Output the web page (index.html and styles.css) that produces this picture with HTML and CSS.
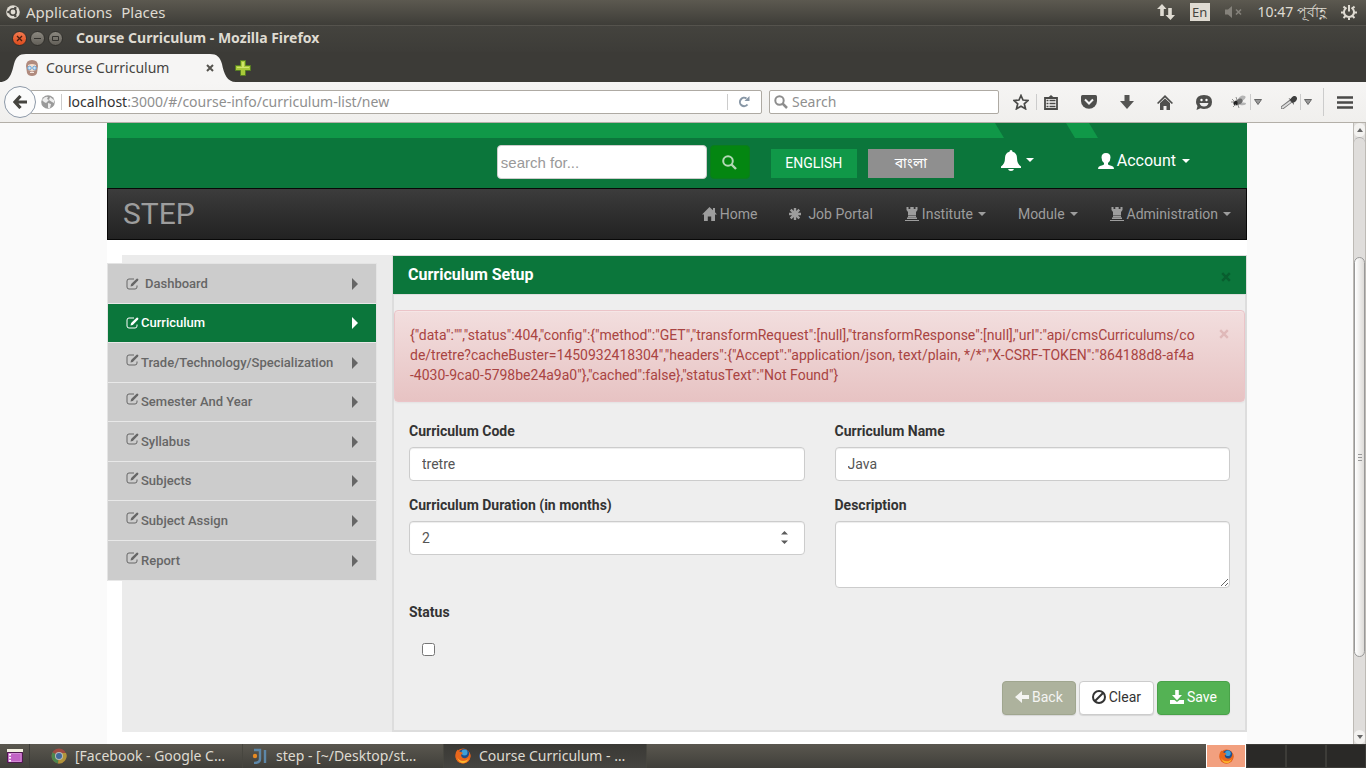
FILE: index.html
```html
<!DOCTYPE html>
<html lang="en">
<head>
<meta charset="utf-8">
<title>Course Curriculum</title>
<link rel="stylesheet" href="styles.css">
</head>
<body>
<svg class="defs" width="0" height="0" aria-hidden="true">
  <symbol id="i-edit" viewBox="0 0 13 12"><path d="M8 1H3Q1 1 1 3v6q0 2 2 2h6q2 0 2-2V7.500" fill="none" stroke="currentColor"/><path d="M4.500 8.500l.6-2.500L10.600.8q.8-.6 1.500.1t0 1.500L6.800 8z" fill="currentColor"/></symbol>
  <symbol id="i-tower" viewBox="0 0 14 14"><path d="M1.500 0h2v2h1.800V0h3.400v2h1.800V0h2v3L11 5v3.500H3V5L1.500 3zM3 9h8v1.200H3zM2 10.500h10v1.500H2zM0 13h14v1H0z" fill="currentColor"/></symbol>
  <symbol id="i-ff" viewBox="0 0 16 16"><circle cx="8" cy="8" r="7.500" fill="#e2611b"/><circle cx="9" cy="6.500" r="5.500" fill="#1d4f8f"/><circle cx="9.500" cy="4.500" r="3" fill="#3f9fd8"/><path d="M1 4q1-2 2-2.500Q3.500 4 6 4l2 1-2 2q1 4 5 3 3-1 3.500-6Q17 9 13.500 13T4 14.500Q-1 11 1 4z" fill="#e8661c"/><path d="M2 9q2 4 6 4t6-3q-2 5-6 5t-6-6z" fill="#fbb52c"/></symbol>
</svg>

<header class="panel">
  <nav class="panel-menu">
    <svg width="14" height="14" viewBox="0 0 14 14"><circle cx="7" cy="7" r="6.800" fill="#dfdbd2"/><circle cx="7" cy="7" r="3.200" fill="none" stroke="#4b4943" stroke-width="1.600"/><g fill="#4b4943"><circle cx="2.500" cy="7" r="1.300"/><circle cx="9.300" cy="3" r="1.300"/><circle cx="9.300" cy="11" r="1.300"/></g></svg>
    <a href="#">Applications</a>
    <a href="#">Places</a>
  </nav>
  <div class="panel-status">
    <svg width="18" height="18" viewBox="0 0 18 18" fill="#dfdbd2"><path d="M0 6l5-5 4.500 5H6.800v7H3.200V6zM8.500 12h2.700V5h3.600v7H18l-4.500 5z"/></svg>
    <span class="lang-ind">En</span>
    <svg class="mute" width="18" height="14" viewBox="0 0 18 14"><path d="M0 4.500h3l4-3.500v12L3 9.500H0z" fill="#85827b"/><path d="M11 4.500l5 5m0-5l-5 5" stroke="#85827b" stroke-width="1.600"/></svg>
    <span class="clock">10:47 পূর্বাহ্ণ</span>
    <svg width="16" height="16" viewBox="0 0 16 16" fill="none" stroke="#dfdbd2" stroke-width="2"><path d="M5.500 3.700a5 5 0 1 0 5 0M8 1v6.500M2.500 2.500l2 2M13.500 2.500l-2 2M0 8.500h3M13 8.500h3M2.500 14l2-2M13.500 14l-2-2M8 13v3"/></svg>
  </div>
</header>

<div class="titlebar">
  <div class="win-buttons">
    <button class="win close" aria-label="Close window"><svg width="7" height="7" viewBox="0 0 7 7"><path d="M1 1l5 5M6 1L1 6" stroke="#4a2012" stroke-width="1.300"/></svg></button>
    <button class="win" aria-label="Minimize"><svg width="7" height="7" viewBox="0 0 7 7"><path d="M0 3.500h7" stroke="#33322e"/></svg></button>
    <button class="win" aria-label="Maximize"><svg width="7" height="7" viewBox="0 0 7 7"><path d="M.5 1.500h6v4h-6z" fill="none" stroke="#33322e"/></svg></button>
  </div>
  <h1 class="win-title">Course Curriculum - Mozilla Firefox</h1>
</div>

<div class="tabs">
  <div class="tab">
    <svg class="tab-shape" viewBox="0 0 236 28" preserveAspectRatio="none"><path d="M0 28C10 28 12 18 14 10C16 3 19 0 26 0H210C217 0 220 3 222 10C224 20 227 28 236 28Z" fill="#f6f5f4"/></svg>
    <svg class="favicon" width="16" height="16" viewBox="0 0 16 16"><path d="M2 6q0-6 6-6t6 6l-1 7q-1 3-5 3t-5-3z" fill="#b08a7d"/><path d="M4 5q4-2 8 0v5q-4 2-8 0z" fill="#f3ddcd"/><path d="M6 12q2-1 4 0v1H6z" fill="#f4e6df"/><g fill="#cfe4f5" stroke="#6aa6d8"><circle cx="5.500" cy="8" r="1.800"/><circle cx="10.500" cy="8" r="1.800"/></g></svg>
    <span class="tab-title">Course Curriculum</span>
    <button class="tab-close" aria-label="Close tab"><svg width="8" height="8" viewBox="0 0 8 8"><path d="M1 1l6 6M7 1L1 7" stroke="#55534e" stroke-width="2"/></svg></button>
  </div>
  <button class="new-tab" aria-label="New tab"><svg width="16" height="16" viewBox="0 0 16 16"><path d="M5.500.5h5v5h5v5h-5v5h-5v-5h-5v-5h5z" fill="#a8c93a" stroke="#567d22"/><path d="M7 2h2v5h5v1H2V7h5z" fill="#cfe56c"/></svg></button>
</div>

<div class="toolbar">
  <button class="back" aria-label="Back"><svg width="14" height="14" viewBox="0 0 14 14"><path d="M7.500 1L2 7l5.500 6M2.500 7H14" fill="none" stroke="#45443f" stroke-width="3.200"/></svg></button>
  <form class="urlbar">
    <svg width="14" height="14" viewBox="0 0 14 14"><circle cx="7" cy="7" r="6.800" fill="#9a9a9a"/><path d="M1 5q3-4 6-3l-1 2 2 1-3 3-2-1zM9 2l4 3v3l-2-1-3-2zM7 8l3 1-1 4H7z" fill="#ededed"/></svg>
    <span class="vsep"></span>
    <span class="url"><b>localhost</b>:3000/#/course-info/curriculum-list/new</span>
    <span class="vsep"></span>
    <button class="reload" type="button" aria-label="Reload"><svg width="12" height="12" viewBox="0 0 12 12"><path d="M9.500 8.500A4.200 4.200 0 1 1 8.500 2.500" fill="none" stroke="#8796a5" stroke-width="2"/><path d="M6.500 5H11.500V0z" fill="#8796a5"/></svg></button>
  </form>
  <form class="searchbar">
    <svg width="14" height="14" viewBox="0 0 14 14" fill="none" stroke="#8d8d8d" stroke-width="2"><circle cx="5.500" cy="5.500" r="4.200"/><path d="M8.500 8.500L13 13" stroke-width="2.500"/></svg>
    <input type="text" placeholder="Search" aria-label="Search the web">
  </form>
  <div class="tools">
    <span class="group marks">
      <button aria-label="Bookmark"><svg width="16" height="16" viewBox="0 0 16 16"><path d="M8 1.500l2 4.500 5 .5-3.700 3.300 1.200 5L8 12.200l-4.500 2.600 1.200-5L1 6.500 6 6z" fill="none" stroke="#4a4a48" stroke-width="1.700"/></svg></button>
      <span class="vsep"></span>
      <button aria-label="Reading list"><svg width="14" height="15" viewBox="0 0 14 15"><path d="M3 3.500L7 0l4 3.500z" fill="#4a4a48"/><path d="M1 3h12v11H1z" fill="#f4f3f2" stroke="#4a4a48" stroke-width="1.800"/><path d="M2.500 5.500h2m1 0h6m-9 3h2m1 0h6m-9 3h2m1 0h6" stroke="#4a4a48" stroke-width="1.500"/></svg></button>
    </span>
    <button aria-label="Pocket"><svg width="16" height="14" viewBox="0 0 16 14"><path d="M1.500 0h13Q16 0 16 1.500V6a8 7.800 0 0 1-16 0V1.500Q0 0 1.500 0z" fill="#4f4f4d"/><path d="M4 4.500l4 4 4-4" fill="none" stroke="#f4f4f4" stroke-width="2"/></svg></button>
    <button aria-label="Downloads"><svg width="14" height="14" viewBox="0 0 14 14"><path d="M4.500 0h5v6H14l-7 8-7-8h4.500z" fill="#555553"/></svg></button>
    <button aria-label="Home page"><svg width="16" height="15" viewBox="0 0 16 15" fill="#4f4f4d"><path d="M0 8L8 0l8 8-1.200 1L8 2.500 1.200 9z"/><path d="M3 8l5-4.500L13 8v7H9.500v-4h-3v4H3z"/></svg></button>
    <button aria-label="Chat"><svg width="16" height="15" viewBox="0 0 16 15"><path d="M8 0q8 0 8 7t-8 7q-2 0-3.500-.7L.5 15l1-4Q0 9.500 0 7q0-7 8-7z" fill="#4f4f4d"/><circle cx="5.500" cy="5" r="1.200" fill="#fff"/><circle cx="10.500" cy="5" r="1.200" fill="#fff"/><path d="M3.500 8h9q-1 3.500-4.500 3.500T3.500 8z" fill="#eee"/></svg></button>
    <span class="group addon">
      <button aria-label="Firebug"><svg width="16" height="14" viewBox="0 0 16 14"><path d="M7 4q3-5 7-3 2 2-3 5zM8 8q5-1 7 0 0 3-6 2z" fill="#b5b5b5"/><ellipse cx="7.500" cy="7" rx="4.500" ry="2.600" fill="#6d6d6d" transform="rotate(-30 7.500 7)"/><circle cx="4.500" cy="8" r="2.200" fill="#222"/><path d="M1 4l3 3M5 2l1 3M2 12l3-3M8 13l-1-3M0 7h3" stroke="#777" stroke-width=".8"/></svg></button>
      <span class="vsep"></span>
      <button aria-label="Firebug options"><svg width="8" height="6" viewBox="0 0 8 6"><path d="M.5.5h7L4 5.500z" fill="#999" stroke="#666"/></svg></button>
    </span>
    <span class="group addon picker">
      <button aria-label="Colour picker"><svg width="16" height="13" viewBox="0 0 16 13"><path d="M1.500 11.500L10 5" stroke="#777" stroke-width="3.500" stroke-linecap="round"/><path d="M1.500 11.500L9 6" stroke="#ddd" stroke-width="1.800" stroke-linecap="round"/><path d="M7.500 2l2 1q3-4.500 5.500-2.500t-1 5.500l-1.500.5.5 2.500z" fill="#3f3f3f"/></svg></button>
      <span class="vsep"></span>
      <button aria-label="Colour picker options"><svg width="8" height="6" viewBox="0 0 8 6"><path d="M.5.5h7L4 5.500z" fill="#999" stroke="#666"/></svg></button>
    </span>
    <span class="group menu">
      <span class="vsep tall"></span>
      <button aria-label="Menu"><svg width="16" height="13" viewBox="0 0 16 13"><path d="M0 1.500h16M0 6.500h16M0 11.500h16" stroke="#4a4a48" stroke-width="2.600"/></svg></button>
    </span>
  </div>
</div>

<div class="viewport">
  <div class="page">
    <div class="container">
      <div class="stripe"><span class="stripe-long"></span><span class="stripe-short"></span></div>
      <div class="top">
        <form class="search">
          <input type="text" placeholder="search for..." aria-label="Search for">
          <button type="button" aria-label="Search"><svg width="15" height="15" viewBox="0 0 15 15" fill="none" stroke="#b3d9b6" stroke-width="2"><circle cx="6" cy="6" r="4.800"/><path d="M9.500 9.500l4.500 4.500" stroke-width="2.400"/></svg></button>
        </form>
        <button class="locale en" type="button">ENGLISH</button>
        <button class="locale bn" type="button" lang="bn">বাংলা</button>
        <a class="bell" href="#" aria-label="Notifications"><svg width="20" height="21" viewBox="0 0 20 21" fill="#fff"><path d="M10 0q1.500 0 1.500 1.800Q16 3 16 8q0 6 4 8.500v1.500H0v-1.500Q4 14 4 8q0-5 4.500-6.200Q8.500 0 10 0zM7 19h6q-.5 2-3 2t-3-2z"/></svg><i class="caret"></i></a>
        <a class="account" href="#"><svg width="16" height="16" viewBox="0 0 16 16" fill="#fff"><path d="M8 0q4.500 0 4.500 4.500Q12.500 8 10 10v1.500q1 .8 4 1.500 2 .7 2 3H0q0-2.300 2-3 3-.7 4-1.500V10Q3.500 8 3.500 4.500 3.500 0 8 0z"/></svg><span>Account</span><i class="caret"></i></a>
      </div>

      <nav class="navbar">
        <a class="brand" href="#">STEP</a>
        <div class="nav">
          <a href="#"><svg width="15" height="14" viewBox="0 0 15 14" fill="currentColor"><path d="M7.500 0L11 3.300V1h2v4.200L15 7.500h-2V14H9.200V9.500H5.800V14H2V7.500H0z"/></svg>Home</a>
          <a class="wide" href="#"><svg width="12" height="12" viewBox="0 0 12 12" stroke="currentColor" stroke-width="2.400"><path d="M6 0v12M0 6h12M1.700 1.700l8.600 8.600M10.300 1.700l-8.600 8.600"/></svg>Job Portal</a>
          <a href="#"><svg width="14" height="14"><use href="#i-tower"/></svg>Institute<i class="caret"></i></a>
          <a href="#">Module<i class="caret"></i></a>
          <a href="#"><svg width="14" height="14"><use href="#i-tower"/></svg>Administration<i class="caret"></i></a>
        </div>
      </nav>

      <div class="content">
        <nav class="side">
          <a class="level first" href="#"><svg width="13" height="12"><use href="#i-edit"/></svg><span>Dashboard</span></a>
          <a class="level active" href="#"><svg width="13" height="12"><use href="#i-edit"/></svg><span>Curriculum</span></a>
          <a href="#"><svg width="13" height="12"><use href="#i-edit"/></svg><span>Trade/Technology/Specialization</span></a>
          <a href="#"><svg width="13" height="12"><use href="#i-edit"/></svg><span>Semester And Year</span></a>
          <a href="#"><svg width="13" height="12"><use href="#i-edit"/></svg><span>Syllabus</span></a>
          <a href="#"><svg width="13" height="12"><use href="#i-edit"/></svg><span>Subjects</span></a>
          <a href="#"><svg width="13" height="12"><use href="#i-edit"/></svg><span>Subject Assign</span></a>
          <a href="#"><svg width="13" height="12"><use href="#i-edit"/></svg><span>Report</span></a>
        </nav>

        <main class="setup">
          <header class="setup-head">
            <h2>Curriculum Setup</h2>
            <button class="x" type="button" aria-label="Close"><svg width="10" height="10" viewBox="0 0 10 10"><path d="M1.200 1.200l7.600 7.600M8.800 1.200L1.200 8.800" stroke="currentColor" stroke-width="2.400"/></svg></button>
          </header>
          <div class="alert" role="alert">
            <p>{"data":"","status":404,"config":{"method":"GET","transformRequest":[null],"transformResponse":[null],"url":"api/cmsCurriculums/co<br>de/tretre?cacheBuster=1450932418304","headers":{"Accept":"application/json, text/plain, */*","X-CSRF-TOKEN":"864188d8-af4a<br>-4030-9ca0-5798be24a9a0"},"cached":false},"statusText":"Not Found"}</p>
            <button class="x" type="button" aria-label="Dismiss"><svg width="10" height="10" viewBox="0 0 10 10"><path d="M1.200 1.200l7.600 7.600M8.800 1.200L1.200 8.800" stroke="currentColor" stroke-width="2.400"/></svg></button>
          </div>
          <form class="form">
            <div class="field"><label for="code">Curriculum Code</label><input id="code" type="text" value="tretre"></div>
            <div class="field"><label for="name">Curriculum Name</label><input id="name" type="text" value="Java"></div>
            <div class="field"><label for="duration">Curriculum Duration (in months)</label>
              <div class="number"><input id="duration" type="number" value="2"><svg class="spin" width="7" height="13" viewBox="0 0 7 13" fill="#5c5c5c"><path d="M0 3.500L3.500 0 7 3.500zM0 9.500h7L3.500 13z"/></svg></div>
            </div>
            <div class="field"><label for="desc">Description</label><textarea id="desc"></textarea></div>
            <div class="field"><label for="status">Status</label><input id="status" type="checkbox"></div>
            <div class="actions">
              <button class="btn btn-back" type="button"><svg width="14" height="12" viewBox="0 0 14 12" fill="currentColor"><path d="M0 6l7-6v4h7v4H7v4z"/></svg>Back</button>
              <button class="btn btn-clear" type="button"><svg width="14" height="14" viewBox="0 0 14 14" fill="none" stroke="currentColor" stroke-width="2"><circle cx="7" cy="7" r="6"/><path d="M11 3L3 11"/></svg>Clear</button>
              <button class="btn btn-save" type="button"><svg width="14" height="14" viewBox="0 0 14 14" fill="currentColor"><path d="M5.200 0h3.600v5H12L7 10.200 2 5h3.200zM0 10h4.500L7 12l2.500-2H14v4H0z"/></svg>Save</button>
            </div>
          </form>
        </main>
      </div>
    </div>
  </div>
  <div class="scroll" aria-hidden="true">
    <span class="scroll-end"><svg width="6" height="4" viewBox="0 0 6 4"><path d="M0 4l3-4 3 4z" fill="#666"/></svg></span>
    <span class="track above"></span>
    <span class="thumb"><i></i><i></i><i></i></span>
    <span class="track below"></span>
    <span class="scroll-end"><svg width="6" height="4" viewBox="0 0 6 4"><path d="M0 0l3 4 3-4z" fill="#666"/></svg></span>
  </div>
</div>

<footer class="taskbar">
  <button class="desk" aria-label="Show desktop"><svg width="16" height="14" viewBox="0 0 16 14"><path d="M0 0h16v3H0z" fill="#f2efe0"/><path d="M.5 3.500h15v10H.5z" fill="#b657b9" stroke="#4f1a50"/><path d="M2 4.500h12v8H2z" fill="#c264c5" stroke="#d48ad6"/><path d="M2 5h2v1.500H2zM2 8h2v1.500H2zM2 11h2v1.500H2z" fill="#fff"/></svg></button>
  <button class="task"><svg width="16" height="16" viewBox="0 0 16 16" opacity=".75"><circle cx="8" cy="8" r="7.500" fill="#bb4a3f"/><path d="M8 8L1.500 4.300A7.500 7.500 0 0 0 7 15.400z" fill="#4d9b50"/><path d="M8 8l-1 7.400A7.500 7.500 0 0 0 15 5H8z" fill="#d3ad38"/><circle cx="8" cy="8" r="4" fill="#ddd"/><circle cx="8" cy="8" r="3" fill="#3f74b8"/></svg><span>[Facebook - Google C…</span></button>
  <button class="task"><svg width="16" height="16" viewBox="0 0 16 16"><path d="M2 2h6v9q0 4-6 4M13 2v13" fill="none" stroke="#5d87a8" stroke-width="2.400"/><circle cx="3" cy="8" r="2.200" fill="#e68a24"/></svg><span>step - [~/Desktop/st…</span></button>
  <button class="task current"><svg width="16" height="16"><use href="#i-ff"/></svg><span>Course Curriculum - …</span></button>
  <div class="spaces">
    <button class="space on" aria-label="Workspace 1"><svg width="15" height="15"><use href="#i-ff"/></svg></button>
    <button class="space" aria-label="Workspace 2"></button>
    <button class="space" aria-label="Workspace 3"></button>
    <button class="space" aria-label="Workspace 4"></button>
  </div>
</footer>
</body>
</html>
```
FILE: styles.css
```css
* { box-sizing: border-box; }
body {
  margin: 0;
  min-height: 100vh;
  display: flex;
  flex-direction: column;
  background: #fafafa;
  color: #333;
  font: 14px/20px Roboto, "Noto Sans Bengali", sans-serif;
}
button { margin: 0; padding: 0; border: 0; background: none; font: inherit; color: inherit; }
button, a { display: inline-flex; align-items: center; cursor: pointer; }
a { color: inherit; text-decoration: none; }
input, textarea { margin: 0; font: inherit; color: inherit; }
svg { display: block; flex: none; }
.defs { position: absolute; }

/* desktop panel */
.panel, .titlebar, .tabs, .toolbar, .taskbar { font-family: "Noto Sans", "Open Sans", sans-serif; }
.panel {
  height: 25px;
  padding: 0 9px 1px 6px;
  display: flex;
  align-items: center;
  justify-content: space-between;
  background: linear-gradient(#5c5950, #3e3d38);
  color: #dfdbd2;
}
.panel-menu { display: flex; align-items: center; gap: 9px; font-size: 15px; }
.panel-menu svg { margin-right: -3px; }
.panel-status { display: flex; align-items: center; gap: 15px; }
.lang-ind {
  width: 20px;
  background: #dfdbd2;
  color: #45443f;
  text-align: center;
  font-size: 13px;
  line-height: 18px;
}

/* window frame */
.titlebar {
  height: 27px;
  padding: 0 12px 2px;
  display: flex;
  align-items: center;
  gap: 13px;
  border-top: 1px solid #55534d;
  background: linear-gradient(#44433e, #3d3c38);
}
.win-buttons { display: flex; gap: 3px; }
.win {
  width: 15px;
  height: 15px;
  justify-content: center;
  border: 1px solid #31302c;
  border-radius: 50%;
  background: linear-gradient(#8b8880, #625f58);
}
.win.close { background: linear-gradient(#f4794f, #dc4c1d); }
.win-title { margin: 0; color: #dfdbd2; font-size: 14px; line-height: 20px; font-weight: 700; }
.tabs { padding: 2px 2px 0 0; display: flex; background: #3c3b37; }
.tab {
  position: relative;
  width: 236px;
  height: 28px;
  padding: 0 22px 0 24px;
  display: flex;
  align-items: center;
  gap: 6px;
  color: #45443f;
}
.tab-shape { position: absolute; inset: 0; width: 100%; height: 100%; }
.favicon, .tab-title, .tab-close { position: relative; }
.tab-title { flex: 1; white-space: nowrap; }
.new-tab { margin-left: -1px; }

.toolbar {
  height: 41px;
  padding: 0 12px 0 4px;
  display: flex;
  align-items: center;
  border-bottom: 1px solid #b3afa8;
  background: linear-gradient(#f6f5f4, #f0efed);
}
.back {
  position: relative;
  width: 32px;
  height: 32px;
  justify-content: center;
  border: 1px solid #8d99a8;
  border-radius: 50%;
  background: #fbfbfb;
}
.urlbar, .searchbar {
  height: 24px;
  display: flex;
  align-items: center;
  border: 1px solid #aeaaa3;
  border-radius: 2px;
  background: #fff;
}
.urlbar { flex: 1; margin-left: -6px; padding: 0 11px 0 10px; gap: 6px; }
.url { flex: 1; color: #8f8f8f; white-space: nowrap; }
.url b { font-weight: 400; color: #333; }
.reload { margin-left: 4px; }
.vsep { width: 1px; height: 16px; background: #ccc; }
.vsep.tall { height: 28px; }
.searchbar { flex: 0 0 230px; margin-left: 7px; padding: 0 4px; gap: 4px; }
.searchbar input { width: 100%; border: 0; outline: 0; padding: 0; background: none; }
.searchbar input::placeholder { color: #8f8f8f; opacity: 1; }
.tools {
  flex: 0 0 341px;
  margin-left: 14px;
  display: flex;
  align-items: center;
  gap: 23px;
}
.group { display: flex; align-items: center; }
.marks { gap: 7px; }
.addon { gap: 3px; margin-left: -4px; }
.menu { gap: 13px; margin-left: auto; }
.picker + .menu { margin-left: -12px; }

/* page */
.viewport { flex: 1; display: flex; }
.page { flex: 1; padding-left: 1px; display: flex; justify-content: center; }
.container { flex: 0 1 1140px; background: #fff; }
.stripe { height: 15px; display: flex; background: #0b763b; }
.stripe-long {
  width: 897px;
  background: #109848;
  clip-path: polygon(0 0, calc(100% - 9px) 0, 100% 100%, 0 100%);
}
.stripe-short {
  width: 32px;
  margin-left: 62px;
  background: #109848;
  clip-path: polygon(0 0, 23px 0, 100% 100%, 9px 100%);
}
.top {
  height: 50px;
  padding: 0 57px 0 0;
  display: flex;
  align-items: center;
  justify-content: flex-end;
  background: #0b763b;
  color: #fff;
  font-size: 16px;
}
.search { display: flex; gap: 3px; margin: 0 21px 2px 0; }
.search input {
  width: 210px;
  height: 34px;
  padding: 0 3px;
  border: 1px solid #ccc;
  border-radius: 4px;
  background: #fff;
  color: #555;
  font: 15px/20px "Liberation Sans", Arial, sans-serif;
}
.search input::placeholder { color: #999; opacity: 1; }
.search button {
  width: 40px;
  height: 34px;
  justify-content: center;
  border: 1px solid #0a7d1c;
  border-radius: 4px;
  background: #048611;
}
.locale { width: 86px; height: 29px; margin-right: 11px; justify-content: center; font-size: 14px; }
.en { background: #109848; }
.bn { margin-right: 47px; background: #8f8f8f; }
.bell { gap: 5px; margin: 0 64px 6px 0; }
.account { gap: 3px; margin-bottom: 4px; }
.caret {
  border: 4px solid transparent;
  border-top-color: currentColor;
  border-bottom: 0;
}
.account .caret { margin-left: 3px; }

.navbar {
  height: 52px;
  padding: 0 15px;
  display: flex;
  align-items: center;
  justify-content: space-between;
  border: 1px solid #080808;
  background: linear-gradient(#3c3c3c, #222);
  color: #9d9d9d;
}
.brand { font-size: 30px; line-height: 40px; }
.nav { display: flex; gap: 32px; }
.nav a { gap: 3px; }
.nav .wide { gap: 7px; }
.nav .caret { margin-left: 2px; }

.content {
  margin: 15px 0 12px 15px;
  display: flex;
  align-items: stretch;
  background: #ebebeb;
}
.side {
  flex: 0 0 270px;
  align-self: flex-start;
  margin: 8px 15px 0 -15px;
  border: 1px solid #e4e4e4;
  border-bottom: 0;
  background: #ccc;
  color: #666;
  font-size: 13px;
  font-weight: 500;
}
.side a {
  height: 40px;
  padding: 0 18px;
  display: flex;
  gap: 2px;
  border-bottom: 1px solid #e8e8e8;
}
.side a:nth-child(even):not(:last-child) { height: 39px; }
.side a::after {
  content: "";
  margin-left: auto;
  border: 6px solid transparent;
  border-left-color: currentColor;
  border-right: 0;
}
.side svg { margin-bottom: 6px; }
.side .level svg { margin-bottom: 0; }
.side .first { gap: 6px; }
.side .active { background: #0b763b; color: #fff; }

.setup {
  flex: 1;
  border: 2px solid #ddd;
  border-top-width: 1px;
  background: #eee;
}
.setup-head {
  margin: 0 -1px;
  height: 39px;
  padding: 0 15px;
  display: flex;
  align-items: center;
  justify-content: space-between;
  border-bottom: 1px solid #ddd;
  background: #0b763b;
  color: #fff;
}
.setup-head h2 { margin: 0; font-size: 16px; line-height: 20px; font-weight: 700; }
.x { color: #095e2f; }
.setup-head .x { margin-top: 4px; }
.alert {
  margin: 15px 0 19px;
  min-height: 92px;
  padding: 14px 15px;
  display: flex;
  align-items: flex-start;
  justify-content: space-between;
  border: 1px solid #ebc4c8;
  border-radius: 4px;
  background: linear-gradient(#f2dede, #e7c3c3);
  box-shadow: inset 0 1px 0 rgba(255, 255, 255, .25), 0 1px 2px rgba(0, 0, 0, .05);
  color: #a94442;
}
.alert p { margin: 0; }
.alert .x { margin-top: 4px; color: #dfb9b9; }

.form {
  padding: 0 15px 15px;
  display: grid;
  grid-template-columns: 1fr 1fr;
  column-gap: 30px;
  row-gap: 14px;
}
.field { display: flex; flex-direction: column; align-items: flex-start; gap: 6px; }
.field label { font-weight: 700; line-height: 20px; }
.field input:not([type="checkbox"]), .field textarea {
  display: block;
  width: 100%;
  height: 34px;
  padding: 6px 12px;
  border: 1px solid #ccc;
  border-radius: 4px;
  background: #fff;
  color: #555;
  box-shadow: inset 0 1px 1px rgba(0, 0, 0, .075);
}
.field textarea { height: 67px; }
.field input[type="checkbox"] { width: 13px; height: 13px; margin: 15px 0 11px 13px; }
.number { position: relative; width: 100%; }
.number input { appearance: textfield; }
.number input::-webkit-inner-spin-button { appearance: none; }
.spin { position: absolute; right: 17px; top: 10px; }
.actions { grid-column: 1 / -1; display: flex; justify-content: flex-end; gap: 3px; }
.btn {
  height: 34px;
  padding: 0 12px 2px;
  gap: 3px;
  border: 1px solid #ccc;
  border-radius: 4px;
  box-shadow: 0 1px 1px rgba(0, 0, 0, .1);
}
.btn-back { background: #adb29d; border-color: #a0a68f; color: #f4f4f2; }
.btn-clear { background: #fff; color: #333; }
.btn-save { background: #54b254; border-color: #49a249; color: #fff; }

/* scroll bar */
.scroll {
  flex: 0 0 13px;
  display: flex;
  flex-direction: column;
  border-left: 1px solid #bdbab5;
  border-right: 1px solid #bdbab5;
  background: #dfdddb;
}
.scroll-end { height: 14px; display: flex; align-items: center; justify-content: center; background: #f3f2f0; border-radius: 6px; }
.above { flex: 120; border-top: 1px solid #aaa; border-radius: 6px 6px 0 0; }
.thumb {
  flex: 400;
  display: flex;
  flex-direction: column;
  align-items: center;
  justify-content: center;
  gap: 2px;
  border: 1px solid #999;
  border-radius: 6px;
  background: linear-gradient(90deg, #fff, #dddbd8);
}
.thumb i { width: 4px; height: 1px; background: #999; }
.below { flex: 73; }

/* task bar */
.taskbar {
  height: 24px;
  display: flex;
  background: linear-gradient(#5a574f, #403f3a);
  color: #dfdbd2;
  font-size: 14px;
}
.desk { width: 30px; padding-left: 7px; margin-right: 12px; border-right: 1px solid #3d3c38; }
.task { width: 201px; padding-left: 9px; gap: 8px; border-right: 1px solid #47463f; white-space: nowrap; }
.current { width: 203px; padding-left: 11px; background: linear-gradient(#3a3935, #454440); }
.spaces { margin-left: auto; display: flex; }
.space { width: 40px; justify-content: center; border: 1px solid #3d3c38; background: #2a2927; }
.space.on { border: 1px solid #fff; background: #f2a07f; }
```
